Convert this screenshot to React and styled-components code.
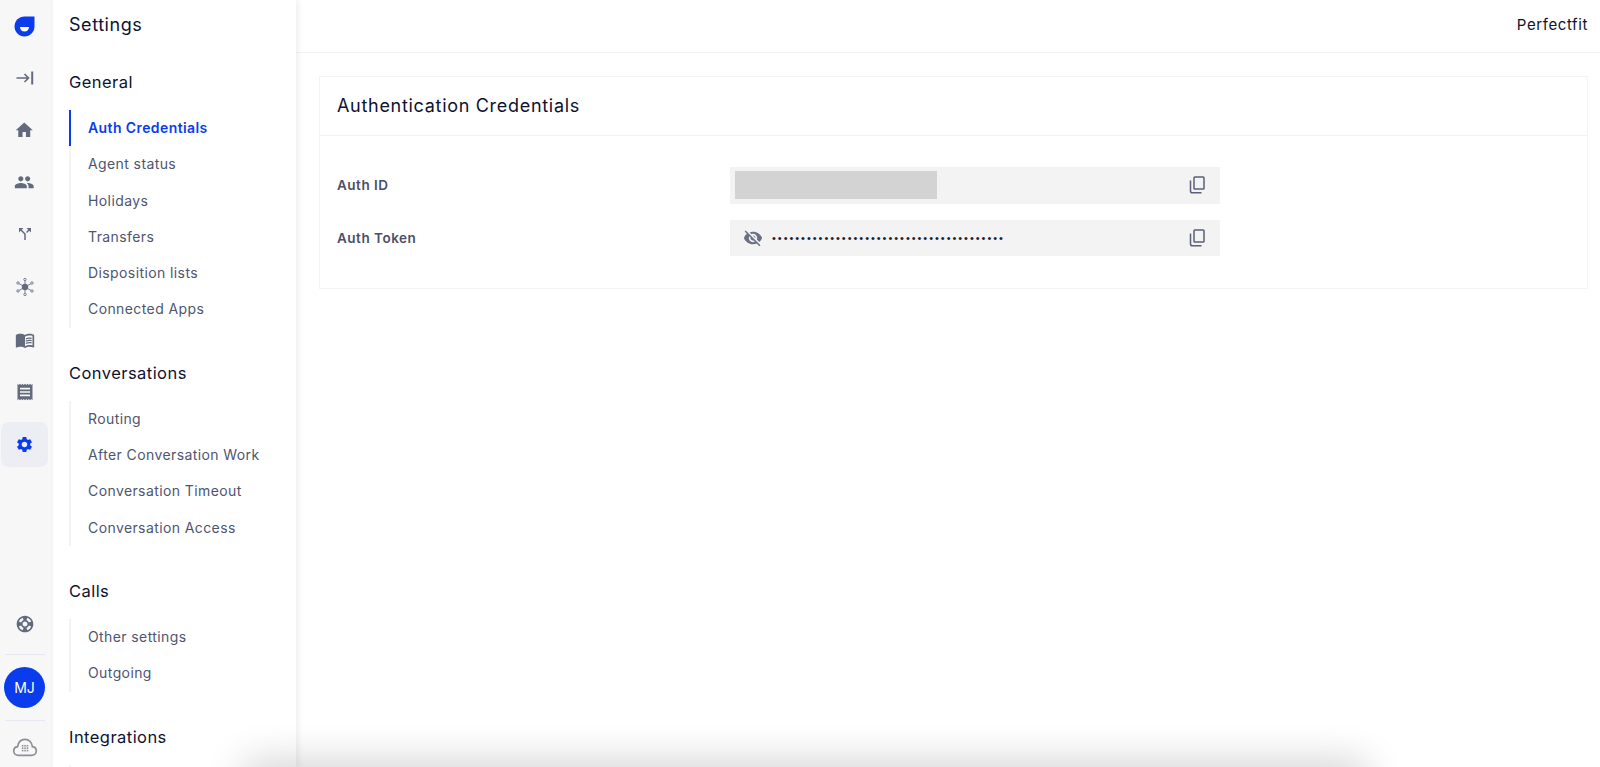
import React from "react";
import styled, { createGlobalStyle } from "styled-components";
import {
  MdHome,
  MdPeople,
  MdCallSplit,
  MdMenuBook,
  MdReceipt,
  MdSettings,
  MdSupport,
  MdVisibilityOff,
} from "react-icons/md";

const GlobalStyle = createGlobalStyle`
  html, body {
    margin: 0;
    height: 100%;
    overflow: hidden;
    background: #fff;
    font-family: Inter, "Liberation Sans", sans-serif;
  }
  * { box-sizing: border-box; }
`;

const Page = styled.div`
  display: flex;
  height: 767px;
  overflow: hidden;
  position: relative;
`;

const Rail = styled.nav`
  width: 53px;
  flex: none;
  padding-right: 4px;
  background: #f7f7f8;
  display: flex;
  flex-direction: column;
  align-items: center;
`;

const RailIcon = styled.div`
  width: 47px;
  height: ${({ $h }) => $h || 52}px;
  flex: none;
  display: flex;
  align-items: center;
  justify-content: center;
  color: ${({ $active }) => ($active ? "#0a3ced" : "#646a7d")};
  background: ${({ $active }) => ($active ? "#eceef4" : "transparent")};
  border-radius: ${({ $active }) => ($active ? "8px" : "0")};
  margin-top: ${({ $active }) => ($active ? "4px" : "0")};
  font-size: ${({ $size }) => $size || 20}px;
`;

const CloudSlot = styled.div`
  height: 46px;
  flex: none;
  padding-top: 6px;
  display: flex;
  align-items: center;
  justify-content: center;
`;

const RailSpacer = styled.div`
  flex: 1;
`;

const RailDivider = styled.div`
  width: 40px;
  height: 1px;
  background: #e6e9f0;
  flex: none;
`;

const Avatar = styled.div`
  width: 41px;
  height: 41px;
  flex: none;
  margin: 12px 0;
  border-radius: 50%;
  background: #0a3ced;
  color: #fff;
  font-size: 14px;
  display: flex;
  align-items: center;
  justify-content: center;
`;

const Sidebar = styled.aside`
  width: 243px;
  flex: none;
  background: #fff;
  box-shadow: 2px 0 6px rgba(30, 30, 50, 0.08);
  padding: 0 0 0 16px;
  position: relative;
  z-index: 1;
  overflow: hidden;
`;

const SidebarTitle = styled.h1`
  margin: 0;
  height: 50px;
  line-height: 50px;
  font-size: 18px;
  font-weight: 400;
  color: #0e1230;
  letter-spacing: 0.55px;
`;

const Group = styled.section`
  margin-top: ${({ $first }) => ($first ? 19 : 32)}px;
`;

const GroupTitle = styled.h2`
  margin: 0 0 15px;
  height: 26px;
  line-height: 26px;
  font-size: 16.5px;
  font-weight: 400;
  color: #0e1230;
  letter-spacing: 0.45px;
`;

const NavList = styled.ul`
  list-style: none;
  margin: 0;
  padding: 0;
  border-left: 2px solid #f3f3f5;
`;

const NavItem = styled.li`
  height: 36.3px;
  line-height: 36.3px;
  padding-left: 17px;
  margin-left: -2px;
  border-left: 2px solid ${({ $active }) => ($active ? "#0a3ced" : "transparent")};
  font-size: 14px;
  font-weight: ${({ $active }) => ($active ? 600 : 400)};
  color: ${({ $active }) => ($active ? "#0a3ced" : "#50556f")};
  letter-spacing: 0.4px;
  white-space: nowrap;
`;

const Main = styled.main`
  flex: 1;
  min-width: 0;
  display: flex;
  flex-direction: column;
`;

const Header = styled.header`
  height: 53px;
  flex: none;
  display: flex;
  align-items: center;
  justify-content: flex-end;
  padding: 0 12px 4px 0;
  border-bottom: 1px solid #f2f2f4;
  font-size: 15px;
  color: #0e1230;
  letter-spacing: 0.6px;
`;

const Card = styled.section`
  margin: 23px 12px 0 23px;
  height: 213px;
  border: 1px solid #f4f4f6;
`;

const CardHeader = styled.h2`
  margin: 0;
  height: 59px;
  padding-left: 17px;
  line-height: 58px;
  font-size: 18px;
  font-weight: 400;
  color: #0e1230;
  letter-spacing: 0.7px;
  border-bottom: 1px solid #f2f2f4;
`;

const CardBody = styled.div`
  padding: 31px 0 0 17px;
  display: flex;
  flex-direction: column;
  gap: 16px;
`;

const Field = styled.div`
  display: flex;
  align-items: center;
`;

const Label = styled.div`
  width: 393px;
  flex: none;
  font-size: 13.5px;
  font-weight: 600;
  color: #4a4f69;
  letter-spacing: 0.5px;
`;

const ValueBox = styled.div`
  width: 490px;
  height: 36.5px;
  padding: 0 15px 0 ${({ $pad }) => $pad}px;
  background: #f3f3f4;
  display: flex;
  align-items: center;
`;

const Redacted = styled.div`
  width: 202px;
  height: 28px;
  background: #d3d3d3;
`;

const EyeIcon = styled(MdVisibilityOff)`
  font-size: 20px;
  color: #6b7084;
  margin-right: 9px;
  flex: none;
`;

const Dots = styled.span`
  font-family: "Liberation Sans", sans-serif;
  font-size: 11px;
  letter-spacing: 1.97px;
  color: #1a1d33;
  white-space: nowrap;
`;

const CopyButton = styled.span`
  margin-left: auto;
  display: flex;
  flex: none;
`;

const BottomGlow = styled.div`
  position: absolute;
  left: 250px;
  right: 240px;
  bottom: -26px;
  height: 24px;
  z-index: 2;
  box-shadow: 0 0 40px 6px rgba(0, 0, 0, 0.2);
`;

const Logo = () => (
  <svg width="21" height="21" viewBox="0 0 20 20">
    <path d="M0.500 10C0.500 4.500 4.700 0.500 10 0.500h9.500V10c0 5.300-4.200 9.500-9.500 9.500S0.500 15.300 0.500 10z" fill="#0a3ced" />
    <path d="M5.700 10.500h8.600c0 2.600-1.900 4.300-4.300 4.300s-4.300-1.700-4.300-4.300z" fill="#fff" />
  </svg>
);

const CollapseIcon = () => (
  <svg width="20" height="20" viewBox="0 0 20 20" fill="none" stroke="#646a7d" strokeWidth="1.600">
    <path d="M1.500 10h12M9.500 6l4 4-4 4" />
    <path d="M17.200 3.500v13" strokeWidth="2" />
  </svg>
);

const HubIcon = () => (
  <svg width="20" height="20" viewBox="0 0 20 20" fill="none" stroke="#7a7f90" strokeWidth="1">
    <path d="M10 10V3.500M10 10v6.500M10 10L3.900 6.500M10 10l6.100-3.500M10 10l-6.100 3.500M10 10l6.100 3.500" />
    <circle cx="10" cy="10" r="3.200" fill="#646a7d" stroke="none" />
    <circle cx="10" cy="2.500" r="1.200" fill="#f7f7f8" />
    <circle cx="10" cy="17.500" r="1.200" fill="#f7f7f8" />
    <circle cx="3" cy="6" r="1.200" fill="#f7f7f8" />
    <circle cx="17" cy="6" r="1.200" fill="#f7f7f8" />
    <circle cx="3" cy="14" r="1.200" fill="#f7f7f8" />
    <circle cx="17" cy="14" r="1.200" fill="#f7f7f8" />
  </svg>
);

const CopyIcon = () => (
  <svg width="16" height="18" viewBox="0 0 16 18" fill="none" stroke="#5b6078" strokeWidth="1.500">
    <rect x="5" y="1" width="10" height="12" rx="0.800" />
    <path d="M1.500 4.500V15c0 1 .7 1.800 1.800 1.800H12.500" />
  </svg>
);

const CloudIcon = () => (
  <svg width="26" height="19" viewBox="0 0 24 18" fill="none">
    <path
      d="M6 16.500h12c2.800 0 4.700-1.800 4.700-4.200 0-2.200-1.600-3.800-3.700-4.100C18.500 4 15.700 1.300 12 1.300S5.600 4 5 8.200c-2.100.3-3.700 1.900-3.700 4.100 0 2.400 1.900 4.200 4.700 4.200z"
      stroke="#8d8f95"
      strokeWidth="1.600"
    />
    <g fill="#8d8f95">
      {[0, 1, 2].map((r) =>
        [0, 1, 2].map((c) => (
          <rect key={`${r}${c}`} x={9 + c * 2.3} y={6.600 + r * 2.3} width="1.500" height="1.500" />
        ))
      )}
    </g>
  </svg>
);

const groups = [
  {
    title: "General",
    items: ["Auth Credentials", "Agent status", "Holidays", "Transfers", "Disposition lists", "Connected Apps"],
  },
  {
    title: "Conversations",
    items: ["Routing", "After Conversation Work", "Conversation Timeout", "Conversation Access"],
  },
  { title: "Calls", items: ["Other settings", "Outgoing"] },
  { title: "Integrations", items: [""] },
];

export default function App() {
  return (
    <>
      <GlobalStyle />
      <Page>
        <Rail>
          <RailIcon><Logo /></RailIcon>
          <RailIcon><CollapseIcon /></RailIcon>
          <RailIcon $size={20.5}><MdHome /></RailIcon>
          <RailIcon $size={20.5}><MdPeople /></RailIcon>
          <RailIcon $size={18}><MdCallSplit /></RailIcon>
          <RailIcon $h={53}><HubIcon /></RailIcon>
          <RailIcon $h={53}><MdMenuBook /></RailIcon>
          <RailIcon><MdReceipt /></RailIcon>
          <RailIcon $active $h={45} $size={19}><MdSettings /></RailIcon>
          <RailSpacer />
          <RailIcon $h={60}><MdSupport /></RailIcon>
          <RailDivider />
          <Avatar>MJ</Avatar>
          <RailDivider />
          <CloudSlot><CloudIcon /></CloudSlot>
        </Rail>
        <Sidebar>
          <SidebarTitle>Settings</SidebarTitle>
          {groups.map((group, i) => (
            <Group key={group.title} $first={i === 0}>
              <GroupTitle>{group.title}</GroupTitle>
              <NavList>
                {group.items.map((item) => (
                  <NavItem key={item} $active={item === "Auth Credentials"}>{item}</NavItem>
                ))}
              </NavList>
            </Group>
          ))}
        </Sidebar>
        <Main>
          <Header>Perfectfit</Header>
          <Card>
            <CardHeader>Authentication Credentials</CardHeader>
            <CardBody>
              <Field>
                <Label>Auth ID</Label>
                <ValueBox $pad={5}>
                  <Redacted />
                  <CopyButton><CopyIcon /></CopyButton>
                </ValueBox>
              </Field>
              <Field>
                <Label>Auth Token</Label>
                <ValueBox $pad={13}>
                  <EyeIcon />
                  <Dots>{"•".repeat(40)}</Dots>
                  <CopyButton><CopyIcon /></CopyButton>
                </ValueBox>
              </Field>
            </CardBody>
          </Card>
        </Main>
        <BottomGlow />
      </Page>
    </>
  );
}
